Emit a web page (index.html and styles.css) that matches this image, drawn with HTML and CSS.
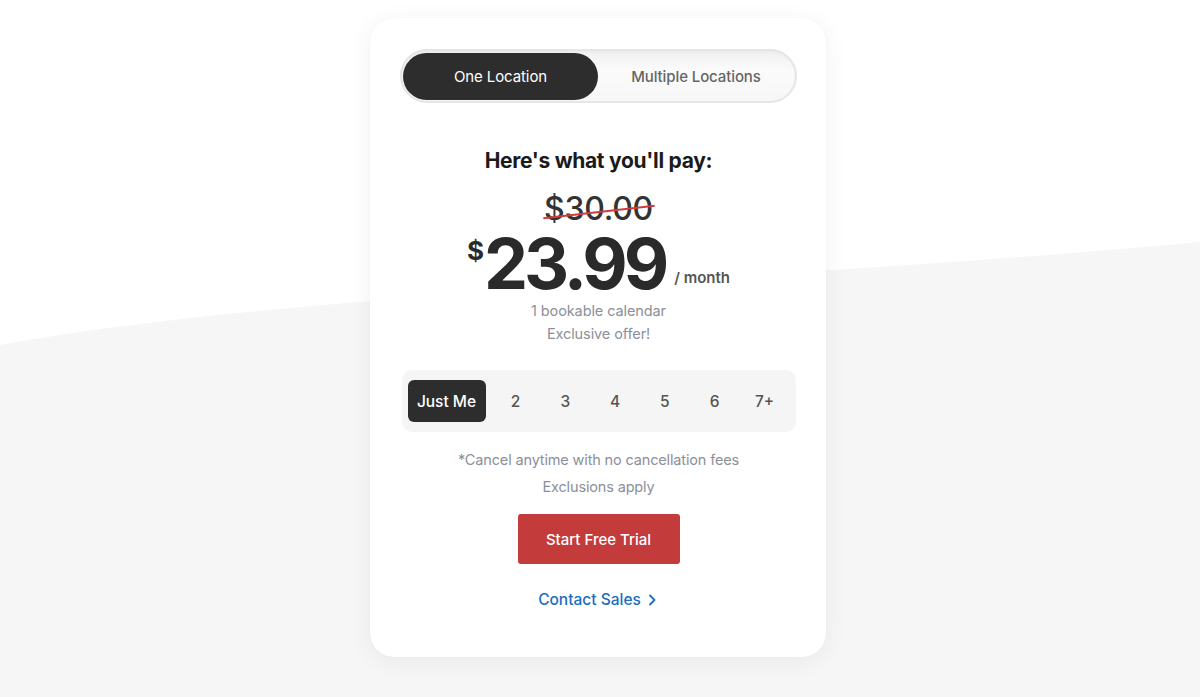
FILE: index.html
```html
<!DOCTYPE html>
<html>
<head>
<meta charset="utf-8">
<link rel="stylesheet" href="styles.css">
</head>
<body>
<svg class="bg-wave" width="1200" height="697" viewBox="0 0 1200 697" preserveAspectRatio="none" aria-hidden="true">
  <path d="M0 345 C 300 290, 800 280, 1200 242 L1200 697 L0 697 Z" fill="#f6f6f6"/>
</svg>
<main class="page">
  <section class="card">
    <div class="toggle">
      <button class="toggle-opt active">One Location</button>
      <button class="toggle-opt">Multiple Locations</button>
    </div>
    <h2 class="heading">Here's what you'll pay:</h2>
    <div class="old-price"><span class="old-text">$30.00</span><span class="strike"></span></div>
    <div class="price">
      <span class="cur">$</span><span class="amount">23.99</span><span class="per">/ month</span>
    </div>
    <p class="sub">1 bookable calendar</p>
    <p class="sub">Exclusive offer!</p>
    <div class="seats">
      <button class="seat active">Just Me</button>
      <button class="seat">2</button>
      <button class="seat">3</button>
      <button class="seat">4</button>
      <button class="seat">5</button>
      <button class="seat">6</button>
      <button class="seat">7+</button>
    </div>
    <p class="note">*Cancel anytime with no cancellation fees</p>
    <p class="note">Exclusions apply</p>
    <button class="cta">Start Free Trial</button>
    <a class="contact" href="#">Contact Sales
      <svg width="14" height="14" viewBox="0 0 14 14"><path d="M5 2.5 L9.5 7 L5 11.5" fill="none" stroke="#1a6dbf" stroke-width="1.8" stroke-linecap="round" stroke-linejoin="round"/></svg>
    </a>
  </section>
</main>
</body>
</html>
```

FILE: styles.css
```css
* { box-sizing: border-box; }
html, body { margin: 0; padding: 0; }
body {
  width: 1200px;
  height: 697px;
  background: #ffffff;
  font-family: "Inter", "Noto Sans", sans-serif;
  position: relative;
  overflow: hidden;
}
.bg-wave {
  position: absolute;
  left: 0;
  top: 0;
  z-index: 0;
}
.page {
  position: relative;
  z-index: 1;
  display: flex;
  justify-content: center;
  padding-top: 18px;
  padding-right: 4px;
}
.card {
  width: 456px;
  height: 639px;
  background: #fff;
  border-radius: 24px;
  box-shadow: 0 4px 24px rgba(0,0,0,0.06), 0 0 2px rgba(0,0,0,0.04);
  display: flex;
  flex-direction: column;
  align-items: center;
  padding: 31px 29px 0 30px;
}
button { font-family: inherit; border: none; cursor: pointer; }
.toggle {
  width: 397px;
  height: 54px;
  border-radius: 27px;
  background: linear-gradient(#f0f0f0, #fbfbfb 40%, #f6f6f6);
  box-shadow: inset 0 0 0 2px #e6e6e6, inset 0 2px 4px rgba(0,0,0,0.06);
  display: flex;
  align-items: center;
  padding: 0 3px;
}
.toggle-opt {
  flex: 1;
  height: 47px;
  border-radius: 24px;
  background: transparent;
  font-size: 15px;
  font-weight: 500;
  color: #666;
  letter-spacing: -0.1px;
}
.toggle-opt.active {
  flex: 0 0 195px;
  background: #2d2d2d;
  color: #fff;
  font-weight: 400;
}
.heading {
  margin: 43px 0 0;
  font-size: 21px;
  font-weight: 700;
  color: #1b1b1b;
  letter-spacing: -0.3px;
  line-height: 30px;
}
.old-price {
  position: relative;
  margin-top: 16px;
  font-size: 32px;
  font-weight: 500;
  color: #333;
  line-height: 34px;
  letter-spacing: -0.3px;
}
.strike {
  position: absolute;
  left: -1px;
  right: -2px;
  top: 19px;
  height: 2px;
  background: #d23b3b;
  transform: rotate(-6.5deg);
}
.price {
  display: flex;
  align-items: flex-start;
  margin-top: 0;
  color: #2a2a2a;
  height: 73px;
}
.cur {
  font-size: 26px;
  font-weight: 700;
  line-height: 26px;
  margin-top: 12px;
  margin-right: 0;
}
.amount {
  font-size: 70px;
  font-weight: 700;
  line-height: 70px;
  padding-top: 3px;
  letter-spacing: -4px;
}
.per {
  align-self: flex-end;
  font-size: 15px;
  font-weight: 600;
  color: #555;
  line-height: 18px;
  margin-left: 9px;
  margin-bottom: 12px;
}
.sub {
  margin: 0;
  font-size: 14.5px;
  color: #8b909a;
  line-height: 23px;
  letter-spacing: -0.1px;
}
.seats {
  margin-top: 25px;
  width: 394px;
  height: 62px;
  background: #f5f5f5;
  border-radius: 10px;
  display: flex;
  align-items: center;
  padding: 0 6px;
  gap: 0;
}
.seat {
  flex: 1;
  height: 42px;
  background: transparent;
  font-size: 15.5px;
  font-weight: 500;
  color: #555;
}
.seat.active {
  flex: 0 0 78px;
  background: #2d2d2d;
  color: #fff;
  border-radius: 6px;
  margin-right: 5px;
}
.note {
  margin: 0;
  font-size: 14.5px;
  color: #8b909a;
  line-height: 27px;
  letter-spacing: -0.15px;
}
.seats + .note { margin-top: 14px; }
.cta {
  margin-top: 14px;
  width: 162px;
  height: 50px;
  background: #c43b3b;
  color: #fff;
  border-radius: 3px;
  font-size: 15px;
  font-weight: 500;
}
.contact {
  margin-top: 26px;
  display: flex;
  align-items: center;
  gap: 4px;
  text-decoration: none;
  color: #1a6dbf;
  font-size: 15.5px;
  font-weight: 500;
}
```
